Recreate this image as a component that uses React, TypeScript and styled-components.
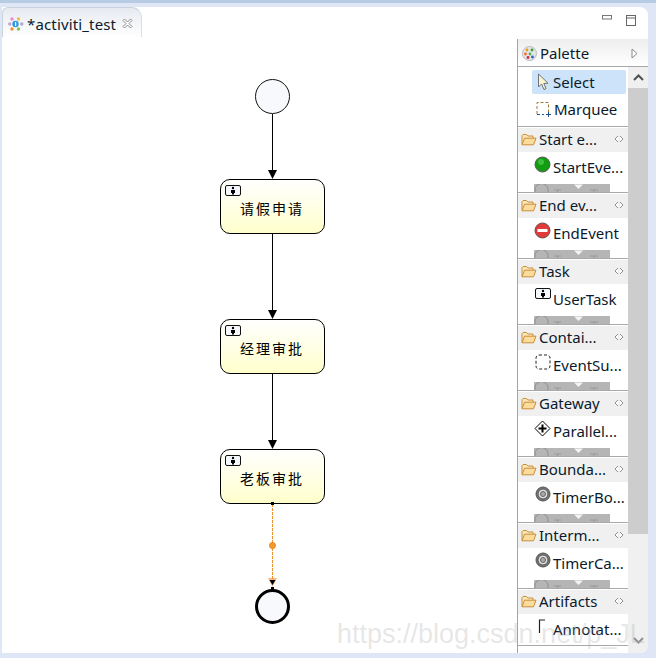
import React, { FC } from 'react';
import styled, { createGlobalStyle } from 'styled-components';

const GlobalStyle = createGlobalStyle`
  html, body {
    margin: 0;
    padding: 0;
    background: #dfe6f5;
  }
`;

const Window = styled.div`
  position: relative;
  width: 656px;
  height: 658px;
  box-sizing: border-box;
  padding: 7px 8px 5px 2px;
  overflow: hidden;
  background: linear-gradient(#b7cbe2 0, #b7cbe2 3px, #dfe6f5 3px);
  font-family: 'Noto Sans', 'Liberation Sans', sans-serif;
  color: #0b1a2c;
`;

const Panel = styled.div`
  display: flex;
  flex-direction: column;
  height: 100%;
  background: #fff;
  border-radius: 0 8px 8px 0;
`;

const TabBar = styled.div`
  display: flex;
  align-items: flex-start;
  justify-content: space-between;
  height: 32px;
  flex: none;
`;

const Tab = styled.div`
  display: flex;
  align-items: center;
  gap: 3px;
  box-sizing: border-box;
  width: 140px;
  height: 30px;
  padding: 2px 0 0 5px;
  border: 1px solid #c9d3de;
  border-bottom: 0;
  border-right-color: #d8dfe8;
  border-radius: 6px 10px 0 0;
  background: linear-gradient(#e6eaf0, #ffffff);
  font-size: 15px;
  letter-spacing: 0.15px;
`;

const TabTitle = styled.span`
  flex: none;
  width: 92px;
  white-space: nowrap;
`;

const WindowControls = styled.div`
  display: flex;
  align-items: flex-start;
  gap: 14px;
  padding: 8px 12px 0 0;
`;

const Main = styled.div`
  flex: 1;
  display: flex;
  min-height: 0;
`;

const Canvas = styled.div`
  position: relative;
  flex: 1;
`;

const EdgeLayer = styled.svg`
  position: absolute;
  inset: 0;
  width: 100%;
  height: 100%;
`;

const StartNode = styled.div`
  position: absolute;
  left: 253px;
  top: 40px;
  box-sizing: border-box;
  width: 35px;
  height: 35px;
  border: 1px solid #111;
  border-radius: 50%;
  background: #f8f9fc;
`;

const EndNode = styled.div`
  position: absolute;
  left: 253px;
  top: 550px;
  box-sizing: border-box;
  width: 35px;
  height: 35px;
  border: 3px solid #000;
  border-radius: 50%;
  background: #f8f9fc;
`;

const TaskNode = styled.div<{ $top: number }>`
  position: absolute;
  left: 218px;
  top: ${p => p.$top}px;
  display: flex;
  align-items: center;
  justify-content: center;
  box-sizing: border-box;
  width: 105px;
  height: 55px;
  padding: 3px 1px 0 0;
  border: 1px solid #000;
  border-radius: 10px;
  background: linear-gradient(#ffffff, #ffffcc);
  font-family: 'Noto Sans CJK SC', sans-serif;
  font-size: 14px;
  letter-spacing: 2px;
  color: #000;
`;

const TaskBadge = styled.span`
  position: absolute;
  left: 4px;
  top: 5px;
  display: flex;
`;

const Handle = styled.span<{ $top: number }>`
  position: absolute;
  left: 269px;
  top: ${p => p.$top}px;
  width: 3px;
  height: 3px;
  background: #000;
`;

const Palette = styled.aside`
  flex: none;
  display: flex;
  flex-direction: column;
  box-sizing: border-box;
  width: 131px;
  border-left: 1px solid #a3a3a3;
  border-radius: 0 0 8px 0;
  overflow: hidden;
`;

const PaletteHeader = styled.div`
  flex: none;
  display: flex;
  align-items: center;
  gap: 3px;
  box-sizing: border-box;
  height: 28px;
  padding: 1px 10px 0 4px;
  border-bottom: 1px solid #a8a8a8;
  background: linear-gradient(#eeeeee, #ffffff);
  font-size: 15px;
`;

const PaletteTitle = styled.span`
  flex: 1;
`;

const PaletteBody = styled.div`
  flex: 1;
  display: flex;
  min-height: 0;
`;

const DrawerColumn = styled.div`
  flex: none;
  width: 110px;
  overflow: hidden;
`;

const ToolGroup = styled.div`
  display: flex;
  flex-direction: column;
  gap: 3px;
  box-sizing: border-box;
  height: 59px;
  padding: 3px 2px 0 14px;
`;

const Tool = styled.div<{ $active?: boolean }>`
  display: flex;
  align-items: center;
  gap: 3px;
  height: 24px;
  padding-left: 4px;
  border-radius: 2px;
  background: ${p => (p.$active ? '#cde3f9' : 'transparent')};
  font-size: 15px;
  white-space: nowrap;
`;

const Drawer = styled.section`
  height: 66px;
  box-sizing: border-box;
  border-top: 1px solid #a9a9a9;
  overflow: hidden;

  &:last-child {
    height: 58px;
    border-bottom: 1px solid #a9a9a9;
  }
`;

const DrawerHeader = styled.div`
  display: flex;
  align-items: center;
  gap: 2px;
  box-sizing: border-box;
  height: 24px;
  margin-top: 1px;
  padding: 0 4px 2px 3px;
  background: #f0f0f0;
  font-size: 15px;
`;

const DrawerTitle = styled.span`
  flex: 1;
  white-space: nowrap;
`;

const DrawerItem = styled.div`
  display: flex;
  align-items: flex-start;
  gap: 2px;
  height: 32px;
  padding: 5px 0 0 16px;
  box-sizing: border-box;
  font-size: 15px;
  line-height: 20px;
  white-space: nowrap;
`;

const ItemIcon = styled.span`
  flex: none;
  display: flex;
  justify-content: center;
  width: 17px;
  margin-top: -1px;
`;

const ClippedRow = styled.div`
  display: flex;
  justify-content: space-between;
  width: 76px;
  height: 8px;
  margin-left: 16px;
  overflow: hidden;
  background: #b5b5b5;
`;

const ClippedMark = styled.span`
  display: flex;
`;

const Scrollbar = styled.div`
  flex: none;
  display: flex;
  flex-direction: column;
  width: 20px;
  background: #f0f0f0;
`;

const ScrollButton = styled.div<{ $height: number }>`
  flex: none;
  display: flex;
  align-items: center;
  justify-content: center;
  height: ${p => p.$height}px;
`;

const ScrollThumb = styled.div`
  flex: none;
  height: 446px;
  background: #cdcdcd;
`;

const ScrollGap = styled.div`
  flex: 1;
`;

const Watermark = styled.div`
  position: absolute;
  left: 337px;
  top: 616px;
  font-family: 'Liberation Sans', Arial, sans-serif;
  font-size: 27px;
  line-height: 36px;
  white-space: nowrap;
  color: rgba(170, 170, 170, 0.3);
  pointer-events: none;
`;

const ActivitiLogo: FC = () => (
  <svg width="16" height="14" viewBox="0 0 16 14">
    <circle cx="4" cy="2" r="1.7" fill="#e58ad0" />
    <circle cx="10.5" cy="2" r="1.7" fill="#f0c040" />
    <circle cx="1.8" cy="7" r="1.7" fill="#c0a0e0" />
    <circle cx="13.8" cy="7" r="1.7" fill="#b0a8d8" />
    <circle cx="4" cy="12" r="1.7" fill="#f09030" />
    <circle cx="10.5" cy="12" r="1.7" fill="#90c050" />
    <circle cx="7.5" cy="7" r="3.2" fill="#2d9ae0" />
    <rect x="7" y="5" width="1.2" height="4" fill="#fff" />
  </svg>
);

const CloseIcon: FC = () => (
  <svg width="11" height="11" viewBox="0 0 11 11">
    <path d="M1 2.5 2.5 1 5.5 4 8.5 1 10 2.5 7 5.5 10 8.5 8.5 10 5.5 7 2.5 10 1 8.5 4 5.5Z" fill="#fff" stroke="#8a8a8a" />
  </svg>
);

const PaletteLogo: FC = () => (
  <svg width="15" height="15" viewBox="0 0 15 15">
    <circle cx="7.5" cy="7.5" r="7" fill="#e4e4ea" stroke="#b8b8c0" />
    <circle cx="5" cy="4" r="1.4" fill="#e8a010" />
    <circle cx="10" cy="4" r="1.4" fill="#3aa030" />
    <circle cx="3.5" cy="8" r="1.4" fill="#f07020" />
    <circle cx="8" cy="8" r="1.4" fill="#50b040" />
    <circle cx="6" cy="11.5" r="1.4" fill="#d03030" />
    <circle cx="10.5" cy="11" r="1.4" fill="#3060c0" />
  </svg>
);

const SelectIcon: FC = () => (
  <svg width="14" height="18" viewBox="0 0 14 18">
    <path d="M2.5 1 2.5 14 5.5 11 8 16.5 10 15.5 7.8 10.5 12 10.2Z" fill="#fbf4d0" stroke="#70727a" />
  </svg>
);

const MarqueeIcon: FC = () => (
  <svg width="15" height="16" viewBox="0 0 15 16">
    <path d="M1 13V1.5H12.5V12" fill="none" stroke="#9a7a30" strokeDasharray="3 2" />
    <path d="M1 13.5H8" fill="none" stroke="#1f5c9c" strokeDasharray="3 2" />
    <path d="M10 13.5H15M12.5 11V16" stroke="#1f4f8c" />
  </svg>
);

const FolderIcon: FC = () => (
  <svg width="16" height="13" viewBox="0 0 16 13">
    <path d="M1 11.5V2.5L2 1.5H5.5L7 3H12V5" fill="#fbe6b8" stroke="#c98f3c" />
    <path d="M1 11.8 3.5 5.2H15L12.5 11.8Z" fill="#fcdc9c" stroke="#c98f3c" strokeLinejoin="round" />
  </svg>
);

const CollapseIcon: FC = () => (
  <svg width="10" height="8" viewBox="0 0 10 8">
    <path d="M4 1 1 4 4 7M6 1 9 4 6 7" fill="#fff" stroke="#8e8e8e" />
  </svg>
);

const StartEventIcon: FC = () => (
  <svg width="17" height="17" viewBox="0 0 17 17">
    <circle cx="8.5" cy="8.5" r="7.5" fill="#129c12" stroke="#5a5a5a" />
    <circle cx="7" cy="6" r="3" fill="#3cc03c" />
  </svg>
);

const EndEventIcon: FC = () => (
  <svg width="17" height="17" viewBox="0 0 17 17">
    <circle cx="8.5" cy="8.5" r="7.5" fill="#e03a3a" stroke="#6a5050" />
    <rect x="3.5" y="7" width="10" height="3" fill="#fff" />
  </svg>
);

const UserTaskIcon: FC = () => (
  <svg width="16" height="11" viewBox="0 0 16 11">
    <rect x="0.5" y="0.5" width="15" height="10" rx="1.5" fill="#f4f8fc" stroke="#111" />
    <circle cx="8" cy="3" r="1.2" fill="#000" />
    <path d="M6 5H10V8H9V9.5H7V8H6Z" fill="#000" />
  </svg>
);

const SubProcessIcon: FC = () => (
  <svg width="16" height="16" viewBox="0 0 16 16">
    <rect x="1" y="1" width="14" height="14" rx="3" fill="none" stroke="#222" strokeDasharray="3 2" />
  </svg>
);

const GatewayIcon: FC = () => (
  <svg width="17" height="17" viewBox="0 0 17 17">
    <path d="M8.5 1 16 8.5 8.5 16 1 8.5Z" fill="#fff" stroke="#000" />
    <path d="M8.5 4.5V12.5M4.5 8.5H12.5" stroke="#000" strokeWidth="2" />
  </svg>
);

const TimerIcon: FC = () => (
  <svg width="16" height="16" viewBox="0 0 16 16">
    <circle cx="8" cy="8" r="7" fill="#777" stroke="#555" />
    <circle cx="8" cy="8" r="5" fill="#ddd" stroke="#555" />
    <circle cx="8" cy="8" r="2.5" fill="#aaa" stroke="#666" />
  </svg>
);

const AnnotationIcon: FC = () => (
  <svg width="14" height="18" viewBox="0 0 14 18">
    <path d="M9 2H3.5V15" fill="none" stroke="#222" strokeWidth="1.2" />
  </svg>
);

const ChevronDown: FC = () => (
  <svg width="11" height="6" viewBox="0 0 11 6">
    <path d="M1 0.5 5.5 5 10 0.5Z" fill="#f4f4f4" />
  </svg>
);

// next tool in the drawer, only its top few pixels show through the strip
const FadedTool: FC = () => (
  <svg width="34" height="8" viewBox="0 0 34 8">
    <path d="M1 8V5.5A6 5.5 0 0 1 14 5.5V8" fill="none" stroke="#8f8f8f" />
    <path d="M20 6H27M23.5 6V8" fill="none" stroke="#989898" />
  </svg>
);

const FadedTail: FC = () => (
  <svg width="22" height="8" viewBox="0 0 22 8">
    <path d="M2 6H10M6 6V8" fill="none" stroke="#989898" />
  </svg>
);

const drawers = [
  { title: 'Start e...', item: 'StartEve...', icon: <StartEventIcon />, more: true },
  { title: 'End ev...', item: 'EndEvent', icon: <EndEventIcon />, more: true },
  { title: 'Task', item: 'UserTask', icon: <UserTaskIcon />, more: true },
  { title: 'Contai...', item: 'EventSu...', icon: <SubProcessIcon />, more: true },
  { title: 'Gateway', item: 'Parallel...', icon: <GatewayIcon />, more: true },
  { title: 'Bounda...', item: 'TimerBo...', icon: <TimerIcon />, more: true },
  { title: 'Interm...', item: 'TimerCa...', icon: <TimerIcon />, more: true },
  { title: 'Artifacts', item: 'Annotat...', icon: <AnnotationIcon />, more: false },
];

const tasks = [
  { top: 140, label: '请假申请' },
  { top: 280, label: '经理审批' },
  { top: 410, label: '老板审批' },
];

const Arrow: FC<{ y: number; color?: string }> = ({ y, color = '#000' }) => (
  <path d={`M268 ${y - 9}H277L272.5 ${y}Z`} fill={color} />
);

const App: FC = () => (
  <Window>
    <GlobalStyle />
    <Panel>
      <TabBar>
        <Tab>
          <ActivitiLogo />
          <TabTitle>*activiti_test</TabTitle>
          <CloseIcon />
        </Tab>
        <WindowControls>
          <svg width="10" height="5" viewBox="0 0 10 5">
            <rect x="0.5" y="0.5" width="9" height="3.5" fill="#fff" stroke="#777" />
          </svg>
          <svg width="10" height="11" viewBox="0 0 10 11">
            <rect x="0.5" y="0.5" width="9" height="10" fill="#fff" stroke="#666" />
            <path d="M0 3H10" stroke="#666" />
          </svg>
        </WindowControls>
      </TabBar>
      <Main>
        <Canvas>
          <EdgeLayer>
            <path d="M270.5 75V132M270.5 195V272M270.5 335V402" stroke="#000" fill="none" />
            <g transform="translate(-2 0)">
              <Arrow y={140} />
              <Arrow y={280} />
              <Arrow y={410} />
              <Arrow y={548} color="#f6b888" />
              <path d="M269.5 541H275.5L272.5 546Z" fill="#000" />
            </g>
            <path d="M270.5 465V541" stroke="#f0902a" strokeDasharray="3 1" fill="none" />
            <circle cx="270.5" cy="506.5" r="3" fill="#f29a30" stroke="#e8861c" />
          </EdgeLayer>
          <StartNode />
          {tasks.map(t => (
            <TaskNode key={t.label} $top={t.top}>
              <TaskBadge>
                <UserTaskIcon />
              </TaskBadge>
              {t.label}
            </TaskNode>
          ))}
          <EndNode />
          <Handle $top={463} />
          <Handle $top={548} />
        </Canvas>
        <Palette>
          <PaletteHeader>
            <PaletteLogo />
            <PaletteTitle>Palette</PaletteTitle>
            <svg width="7" height="11" viewBox="0 0 7 11">
              <path d="M1 1 6 5.5 1 10Z" fill="#fff" stroke="#8a8a8a" />
            </svg>
          </PaletteHeader>
          <PaletteBody>
            <DrawerColumn>
              <ToolGroup>
                <Tool $active>
                  <SelectIcon />
                  Select
                </Tool>
                <Tool>
                  <MarqueeIcon />
                  Marquee
                </Tool>
              </ToolGroup>
              {drawers.map(d => (
                <Drawer key={d.title}>
                  <DrawerHeader>
                    <FolderIcon />
                    <DrawerTitle>{d.title}</DrawerTitle>
                    <CollapseIcon />
                  </DrawerHeader>
                  <DrawerItem>
                    <ItemIcon>{d.icon}</ItemIcon>
                    {d.item}
                  </DrawerItem>
                  {d.more && (
                    <ClippedRow>
                      <ClippedMark>
                        <FadedTool />
                      </ClippedMark>
                      <ClippedMark>
                        <ChevronDown />
                      </ClippedMark>
                      <ClippedMark>
                        <FadedTail />
                      </ClippedMark>
                    </ClippedRow>
                  )}
                </Drawer>
              ))}
            </DrawerColumn>
            <Scrollbar>
              <ScrollButton $height={21}>
                <svg width="11" height="7" viewBox="0 0 11 7">
                  <path d="M1 6 5.5 1.5 10 6" fill="none" stroke="#505050" strokeWidth="2" />
                </svg>
              </ScrollButton>
              <ScrollThumb />
              <ScrollGap />
              <ScrollButton $height={25}>
                <svg width="11" height="7" viewBox="0 0 11 7">
                  <path d="M1 1 5.5 5.5 10 1" fill="none" stroke="#909090" strokeWidth="2" />
                </svg>
              </ScrollButton>
            </Scrollbar>
          </PaletteBody>
        </Palette>
      </Main>
    </Panel>
    <Watermark>https://blog.csdn.net/p_JL</Watermark>
  </Window>
);

export default App;
